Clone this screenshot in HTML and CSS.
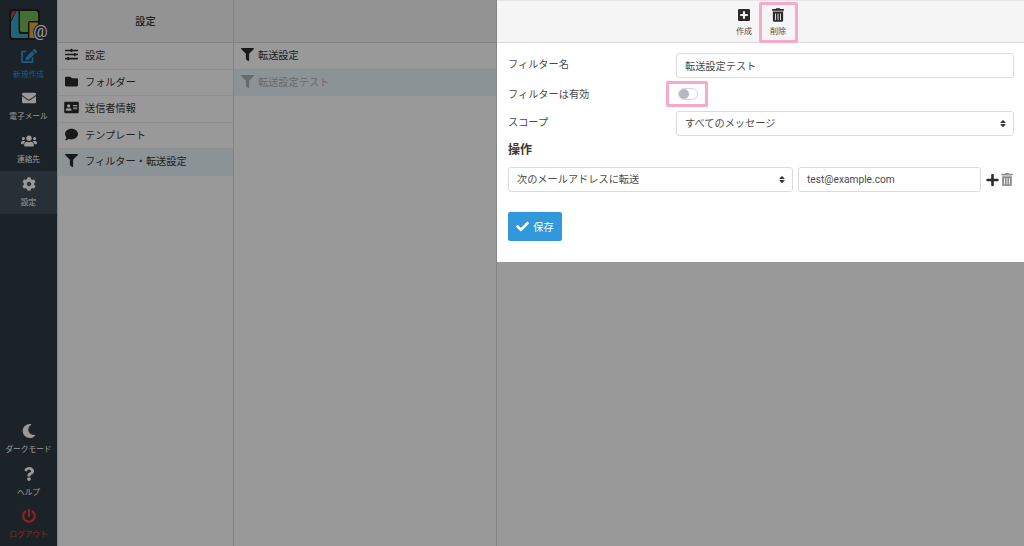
FILE: index.html
```html
<!DOCTYPE html>
<html lang="ja">
<head>
<meta charset="utf-8">
<title>設定</title>
<link rel="stylesheet" href="styles.css">
</head>
<body>
<svg class="sprite" xmlns="http://www.w3.org/2000/svg">
<symbol id="i-edit" viewBox="0 0 576 512"><path d="M402.6 83.2l90.2 90.2c3.8 3.8 3.8 10 0 13.8L274.4 405.6l-92.8 10.3c-12.4 1.4-22.9-9.1-21.5-21.5l10.3-92.8L388.8 83.2c3.8-3.8 10-3.8 13.8 0zm162-22.9l-48.8-48.8c-15.2-15.2-39.9-15.2-55.2 0l-35.4 35.4c-3.8 3.8-3.8 10 0 13.8l90.2 90.2c3.8 3.8 10 3.8 13.8 0l35.4-35.4c15.2-15.3 15.2-40 0-55.2zM384 346.2V448H64V128h73.1c3.2 0 6.2-1.3 8.5-3.5l40-40c7.6-7.6 2.2-20.5-8.5-20.5H48C21.5 64 0 85.5 0 112v352c0 26.5 21.5 48 48 48h352c26.5 0 48-21.5 48-48V306.2c0-10.7-12.9-16-20.5-8.5l-40 40c-2.2 2.3-3.5 5.3-3.5 8.5z"/></symbol>
<symbol id="i-envelope" viewBox="0 0 512 512"><path d="M502.3 190.8c3.9-3.1 9.7-.2 9.7 4.7V400c0 26.5-21.5 48-48 48H48c-26.5 0-48-21.5-48-48V195.6c0-5 5.7-7.8 9.7-4.7 22.4 17.4 52.1 39.5 154.1 113.6 21.1 15.4 56.7 47.8 92.2 47.6 35.7.3 72-32.8 92.3-47.6 102-74.1 131.6-96.3 154-113.7zM256 320c23.2.4 56.6-29.2 73.4-41.4 132.7-96.3 142.8-104.7 173.4-128.7 5.8-4.5 9.2-11.5 9.2-18.9v-19c0-26.5-21.5-48-48-48H48C21.5 64 0 85.5 0 112v19c0 7.4 3.4 14.3 9.2 18.9 30.6 23.9 40.7 32.4 173.4 128.7 16.8 12.2 50.2 41.8 73.4 41.4z"/></symbol>
<symbol id="i-users" viewBox="0 0 640 512"><path d="M96 224c35.3 0 64-28.7 64-64s-28.7-64-64-64-64 28.7-64 64 28.7 64 64 64zm448 0c35.3 0 64-28.7 64-64s-28.7-64-64-64-64 28.7-64 64 28.7 64 64 64zm32 32h-64c-17.6 0-33.5 7.1-45.1 18.6 40.3 22.1 68.9 62 75.1 109.4h66c17.7 0 32-14.3 32-32v-32c0-35.3-28.7-64-64-64zm-256 0c61.9 0 112-50.1 112-112S381.9 32 320 32 208 82.1 208 144s50.1 112 112 112zm76.8 32h-8.3c-20.8 10-43.9 16-68.5 16s-47.6-6-68.5-16h-8.3C179.6 288 128 339.6 128 403.2V432c0 26.5 21.5 48 48 48h288c26.5 0 48-21.5 48-48v-28.8c0-63.6-51.6-115.2-115.2-115.2zm-223.7-13.4C161.5 263.1 145.6 256 128 256H64c-35.3 0-64 28.7-64 64v32c0 17.7 14.3 32 32 32h65.9c6.3-47.4 34.9-87.3 75.2-109.4z"/></symbol>
<symbol id="i-cog" viewBox="0 0 512 512"><path d="M487.4 315.7l-42.6-24.6c4.3-23.2 4.3-47 0-70.2l42.6-24.6c4.9-2.8 7.1-8.6 5.5-14-11.1-35.6-30-67.8-54.7-94.6-3.8-4.1-10-5.1-14.8-2.3L380.8 110c-17.9-15.4-38.5-27.3-60.8-35.1V25.8c0-5.6-3.9-10.5-9.4-11.7-36.7-8.2-74.3-7.8-109.2 0-5.5 1.2-9.4 6.1-9.4 11.7V75c-22.2 7.9-42.8 19.8-60.8 35.1L88.7 85.5c-4.9-2.8-11-1.9-14.8 2.3-24.7 26.7-43.6 58.9-54.7 94.6-1.7 5.4.6 11.2 5.5 14L67.3 221c-4.3 23.2-4.3 47 0 70.2l-42.6 24.6c-4.9 2.8-7.1 8.6-5.5 14 11.1 35.6 30 67.8 54.7 94.6 3.8 4.1 10 5.1 14.8 2.3l42.6-24.6c17.9 15.4 38.5 27.3 60.8 35.1v49.2c0 5.6 3.9 10.5 9.4 11.7 36.7 8.2 74.3 7.8 109.2 0 5.5-1.2 9.4-6.1 9.4-11.7v-49.2c22.2-7.9 42.8-19.8 60.8-35.1l42.6 24.6c4.9 2.8 11 1.9 14.8-2.3 24.7-26.7 43.6-58.9 54.7-94.6 1.5-5.5-.7-11.3-5.6-14.1zM256 336c-44.1 0-80-35.9-80-80s35.9-80 80-80 80 35.9 80 80-35.9 80-80 80z"/></symbol>
<symbol id="i-moon" viewBox="0 0 512 512"><path d="M283.211 512c78.962 0 151.079-35.925 198.857-94.792 7.068-8.708-.639-21.43-11.562-19.35-124.203 23.654-238.262-71.576-238.262-196.954 0-72.222 38.662-138.635 101.498-174.394 9.686-5.512 7.25-20.197-3.756-22.23A258.156 258.156 0 0 0 283.211 0c-141.309 0-256 114.511-256 256 0 141.309 114.511 256 256 256z"/></symbol>
<symbol id="i-question" viewBox="0 0 384 512"><path d="M202.021 0C122.202 0 70.503 32.703 29.914 91.026c-7.363 10.58-5.093 25.086 5.178 32.874l43.138 32.709c10.373 7.865 25.132 6.026 33.253-4.148 25.049-31.381 43.63-49.449 82.757-49.449 30.764 0 68.816 19.799 68.816 49.631 0 22.552-18.617 34.134-48.993 51.164-35.423 19.86-82.299 44.576-82.299 106.405V320c0 13.255 10.745 24 24 24h72.471c13.255 0 24-10.745 24-24v-5.773c0-42.86 125.268-44.645 125.268-160.627C377.504 66.256 286.902 0 202.021 0zM192 373.459c-38.196 0-69.271 31.075-69.271 69.271 0 38.195 31.075 69.27 69.271 69.27s69.271-31.075 69.271-69.271-31.075-69.27-69.271-69.27z"/></symbol>
<symbol id="i-power" viewBox="0 0 512 512"><path d="M400 54.1c63 45 104 118.6 104 201.9 0 136.8-110.8 247.7-247.5 248C120 504.3 8.2 393 8 256.4 7.9 173.1 48.9 99.3 111.8 54.2c11.7-8.3 28-4.8 35 7.7L162.6 90c5.9 10.5 3.1 23.8-6.6 31-41.5 30.8-68 79.6-68 134.9-.1 92.3 74.5 168.1 168 168.1 91.6 0 168.6-74.2 168-169.1-.3-51.8-24.7-101.8-68.1-134-9.7-7.2-12.4-20.5-6.5-30.9l15.8-28.1c7-12.4 23.2-16.1 34.8-7.8zM296 264V24c0-13.3-10.7-24-24-24h-32c-13.3 0-24 10.7-24 24v240c0 13.3 10.7 24 24 24h32c13.3 0 24-10.7 24-24z"/></symbol>
<symbol id="i-sliders" viewBox="0 0 512 512"><path d="M496 384H160v-16c0-8.8-7.2-16-16-16h-32c-8.8 0-16 7.2-16 16v16H16c-8.8 0-16 7.2-16 16v32c0 8.8 7.2 16 16 16h80v16c0 8.8 7.2 16 16 16h32c8.8 0 16-7.2 16-16v-16h336c8.8 0 16-7.2 16-16v-32c0-8.8-7.2-16-16-16zm0-160h-80v-16c0-8.8-7.2-16-16-16h-32c-8.8 0-16 7.2-16 16v16H16c-8.8 0-16 7.2-16 16v32c0 8.8 7.2 16 16 16h336v16c0 8.8 7.2 16 16 16h32c8.8 0 16-7.2 16-16v-16h80c8.8 0 16-7.2 16-16v-32c0-8.8-7.2-16-16-16zm0-160H288V48c0-8.8-7.2-16-16-16h-32c-8.8 0-16 7.2-16 16v16H16C7.2 64 0 71.2 0 80v32c0 8.8 7.2 16 16 16h208v16c0 8.8 7.2 16 16 16h32c8.8 0 16-7.2 16-16v-16h208c8.8 0 16-7.2 16-16V80c0-8.8-7.2-16-16-16z"/></symbol>
<symbol id="i-folder" viewBox="0 0 512 512"><path d="M464 128H272l-64-64H48C21.49 64 0 85.49 0 112v288c0 26.51 21.49 48 48 48h416c26.51 0 48-21.49 48-48V176c0-26.51-21.49-48-48-48z"/></symbol>
<symbol id="i-card" viewBox="0 0 576 512"><path d="M528 32H48C21.5 32 0 53.5 0 80v352c0 26.5 21.5 48 48 48h480c26.5 0 48-21.5 48-48V80c0-26.5-21.5-48-48-48zm-352 96c35.3 0 64 28.7 64 64s-28.7 64-64 64-64-28.7-64-64 28.7-64 64-64zm112 236.8c0 10.6-10 19.2-22.4 19.2H86.4C74 384 64 375.4 64 364.8v-19.2c0-31.8 30.1-57.6 67.2-57.6h5c12.3 5.1 25.7 8 39.8 8s27.6-2.9 39.8-8h5c37.1 0 67.2 25.8 67.2 57.6v19.2zM512 312c0 4.4-3.6 8-8 8H360c-4.4 0-8-3.6-8-8v-16c0-4.4 3.6-8 8-8h144c4.4 0 8 3.6 8 8v16zm0-64c0 4.4-3.6 8-8 8H360c-4.4 0-8-3.6-8-8v-16c0-4.4 3.6-8 8-8h144c4.4 0 8 3.6 8 8v16zm0-64c0 4.4-3.6 8-8 8H360c-4.4 0-8-3.6-8-8v-16c0-4.4 3.6-8 8-8h144c4.4 0 8 3.6 8 8v16z"/></symbol>
<symbol id="i-comment" viewBox="0 0 512 512"><path d="M256 32C114.6 32 0 125.1 0 240c0 49.6 21.4 95 57 130.7C44.5 421.1 2.7 466 2.2 466.5c-2.2 2.3-2.8 5.7-1.5 8.7S4.8 480 8 480c66.3 0 116-31.8 140.6-51.4 32.7 12.3 69 19.4 107.4 19.4 141.4 0 256-93.1 256-208S397.4 32 256 32z"/></symbol>
<symbol id="i-filter" viewBox="0 0 512 512"><path d="M487.976 0H24.028C2.71 0-8.047 25.866 7.058 40.971L192 225.941V432c0 7.831 3.821 15.17 10.237 19.662l80 55.98C298.02 518.69 320 507.493 320 487.98V225.941l184.947-184.97C520.021 25.896 509.338 0 487.976 0z"/></symbol>
<symbol id="i-plus-square" viewBox="0 0 448 512"><path d="M400 32H48C21.5 32 0 53.5 0 80v352c0 26.5 21.5 48 48 48h352c26.5 0 48-21.5 48-48V80c0-26.5-21.5-48-48-48zm-32 252c0 6.6-5.4 12-12 12h-92v92c0 6.6-5.4 12-12 12h-56c-6.6 0-12-5.4-12-12v-92H92c-6.6 0-12-5.4-12-12v-56c0-6.6 5.4-12 12-12h92v-92c0-6.6 5.4-12 12-12h56c6.6 0 12 5.4 12 12v92h92c6.6 0 12 5.4 12 12v56z"/></symbol>
<symbol id="i-trash" viewBox="0 0 448 512"><path d="M32 464a48 48 0 0 0 48 48h288a48 48 0 0 0 48-48V128H32zm272-256a16 16 0 0 1 32 0v224a16 16 0 0 1-32 0zm-96 0a16 16 0 0 1 32 0v224a16 16 0 0 1-32 0zm-96 0a16 16 0 0 1 32 0v224a16 16 0 0 1-32 0zM432 32H312l-9.4-18.7A24 24 0 0 0 281.1 0H166.8a23.72 23.72 0 0 0-21.4 13.3L136 32H16A16 16 0 0 0 0 48v32a16 16 0 0 0 16 16h416a16 16 0 0 0 16-16V48a16 16 0 0 0-16-16z"/></symbol>
<symbol id="i-plus" viewBox="0 0 448 512"><path d="M416 208H272V64c0-17.67-14.33-32-32-32h-32c-17.67 0-32 14.33-32 32v144H32c-17.67 0-32 14.33-32 32v32c0 17.67 14.33 32 32 32h144v144c0 17.67 14.33 32 32 32h32c17.67 0 32-14.33 32-32V304h144c17.67 0 32-14.33 32-32v-32c0-17.67-14.33-32-32-32z"/></symbol>
<symbol id="i-check" viewBox="0 0 512 512"><path d="M173.898 439.404l-166.4-166.4c-9.997-9.997-9.997-26.206 0-36.204l36.203-36.204c9.997-9.998 26.207-9.998 36.204 0L192 312.69 432.095 72.596c9.997-9.997 26.207-9.997 36.204 0l36.203 36.204c9.997 9.997 9.997 26.206 0 36.204l-294.4 294.401c-9.998 9.997-26.207 9.997-36.204-.001z"/></symbol>
<symbol id="i-sort" viewBox="0 0 320 512"><path d="M41 288h238c21.4 0 32.1 25.9 17 41L177 448c-9.4 9.4-24.6 9.4-33.9 0L24 329c-15.1-15.1-4.4-41 17-41zm255-105L177 64c-9.4-9.4-24.6-9.4-33.9 0L24 183c-15.1 15.1-4.4 41 17 41h238c21.4 0 32.1-25.9 17-41z"/></symbol>
</svg>

<div class="app">
  <nav class="sidebar">
    <div class="logo">
      <svg class="logo-mark" viewBox="0 0 31 31">
        <rect x="0" y="0" width="31" height="31" rx="3" fill="#2a1f22"/>
        <path d="M2 6 Q2 2 5 2 H7 L2 11 Z" fill="#d23a4a"/>
        <path d="M7.500 2 H9.500 V22 Q9.500 25 12 25 H19 V29 H4 Q2 29 2 27 V13 Z" fill="#34a9c9"/>
        <path d="M11 2 H26 Q29 2 29 5 V12 H21 Q19 12 19 14 V23 H13 Q11 23 11 21 Z" fill="#75b755"/>
        <path d="M21 13.500 H29 V27 Q29 29 27 29 H20.500 V14 Z" fill="#e0ad3d"/>
      </svg>
      <span class="logo-at">@</span>
    </div>
    <a class="nav-item nav-new"><svg class="nav-icon"><use href="#i-edit"/></svg><span>新規作成</span></a>
    <a class="nav-item"><svg class="nav-icon"><use href="#i-envelope"/></svg><span>電子メール</span></a>
    <a class="nav-item"><svg class="nav-icon"><use href="#i-users"/></svg><span>連絡先</span></a>
    <a class="nav-item nav-active"><svg class="nav-icon"><use href="#i-cog"/></svg><span>設定</span></a>
    <div class="nav-spacer"></div>
    <a class="nav-item"><svg class="nav-icon"><use href="#i-moon"/></svg><span>ダークモード</span></a>
    <a class="nav-item"><svg class="nav-icon"><use href="#i-question"/></svg><span>ヘルプ</span></a>
    <a class="nav-item nav-logout"><svg class="nav-icon"><use href="#i-power"/></svg><span>ログアウト</span></a>
  </nav>

  <section class="col col-settings">
    <header class="col-head">設定</header>
    <a class="row"><svg class="row-icon"><use href="#i-sliders"/></svg>設定</a>
    <a class="row"><svg class="row-icon"><use href="#i-folder"/></svg>フォルダー</a>
    <a class="row"><svg class="row-icon row-icon-wide"><use href="#i-card"/></svg>送信者情報</a>
    <a class="row"><svg class="row-icon"><use href="#i-comment"/></svg>テンプレート</a>
    <a class="row row-selected"><svg class="row-icon"><use href="#i-filter"/></svg>フィルター・転送設定</a>
  </section>

  <section class="col col-filters">
    <header class="col-head"></header>
    <a class="row"><svg class="row-icon"><use href="#i-filter"/></svg>転送設定</a>
    <a class="row row-selected row-muted"><svg class="row-icon"><use href="#i-filter"/></svg>転送設定テスト</a>
  </section>
</div>

<div class="dim"></div>

<aside class="panel">
  <div class="toolbar">
    <button class="tool"><svg class="tool-icon"><use href="#i-plus-square"/></svg><span>作成</span></button>
    <button class="tool mark"><svg class="tool-icon"><use href="#i-trash"/></svg><span>削除</span></button>
  </div>
  <form class="form">
    <div class="field">
      <label>フィルター名</label>
      <input class="control" type="text" value="転送設定テスト">
    </div>
    <div class="field field-toggle">
      <label>フィルターは有効</label>
      <span class="toggle mark"><span class="knob"></span></span>
    </div>
    <div class="field">
      <label>スコープ</label>
      <div class="select"><select class="control"><option>すべてのメッセージ</option></select><svg class="sort"><use href="#i-sort"/></svg></div>
    </div>
    <h3 class="section">操作</h3>
    <div class="action">
      <div class="select select-action"><select class="control"><option>次のメールアドレスに転送</option></select><svg class="sort"><use href="#i-sort"/></svg></div>
      <input class="control action-input" type="text" value="test@example.com">
      <svg class="action-plus"><use href="#i-plus"/></svg>
      <svg class="action-trash"><use href="#i-trash"/></svg>
    </div>
    <button class="save" type="button"><svg class="save-icon"><use href="#i-check"/></svg>保存</button>
  </form>
</aside>
</body>
</html>
```

FILE: styles.css
```css
* { box-sizing: border-box; }
html, body { margin: 0; height: 100%; overflow: hidden; }
body {
  position: relative;
  font-family: Roboto, "Noto Sans CJK JP", sans-serif;
  color: #363636;
  background: #fff;
}
.sprite { display: none; }
.app { display: flex; height: 546px; }

.sidebar {
  width: 57px;
  flex: none;
  display: flex;
  flex-direction: column;
  background: #2d3a44;
}
.logo { position: relative; height: 43px; flex: none; padding: 9px 0 0 9px; }
.logo-mark { display: block; width: 31px; height: 31px; }
.logo-at {
  position: absolute;
  left: 33px;
  top: 24px;
  width: 15px;
  height: 17px;
  border-radius: 50%;
  background: #2d3a44;
  font-size: 16px;
  line-height: 16px;
  text-align: center;
  color: #fff;
}
.nav-item {
  height: 42.67px;
  flex: none;
  display: flex;
  flex-direction: column;
  align-items: center;
  justify-content: center;
  gap: 6px;
  color: #fff;
  font-size: 7.7px;
  line-height: 11px;
  white-space: nowrap;
}
.nav-icon { width: 16px; height: 14px; fill: currentColor; }
.nav-new { color: #3298dc; }
.nav-active { background: #414f5c; }
.nav-logout { color: #ee3b3b; }
.nav-spacer { flex: 1; }

.col { border-right: 1px solid #dbdbdb; flex: none; }
.col-settings { width: 177px; border-left: 1px solid #dbdbdb; }
.col-filters { width: 263px; }
.col-head {
  height: 43px;
  padding-bottom: 1px;
  background: #f5f5f5;
  border-bottom: 1px solid #dbdbdb;
  display: flex;
  align-items: center;
  justify-content: center;
  font-size: 10.2px;
  font-weight: 500;
}
.row {
  height: 26.5px;
  display: flex;
  align-items: center;
  gap: 7px;
  padding: 0 0 2px 7px;
  border-bottom: 1px solid #ededed;
  font-size: 10.2px;
  white-space: nowrap;
}
.col-filters .row { gap: 4px; }
.row-icon { width: 13px; height: 13px; fill: #2b2b2b; flex: none; }
.row-icon-wide { width: 15px; margin: 0 -1px; }
.row-selected { background: #eaf5fa; border-bottom-color: #eaf5fa; }
.row-muted { color: #aeb2b5; }
.row-muted .row-icon { fill: #aeb2b5; }

.dim { position: absolute; inset: 0; background: rgba(0, 0, 0, 0.4); }

.panel {
  position: absolute;
  left: 497px;
  top: 0;
  width: 527px;
  height: 262px;
  background: #fff;
  border-top: 1px solid #e6e6e6;
  color: #4a4a4a;
}
.toolbar {
  height: 42px;
  background: #f5f5f5;
  border-bottom: 1px solid #dbdbdb;
  display: flex;
  justify-content: center;
  padding-left: 1px;
}
.tool {
  width: 34px;
  border: 0;
  padding: 7px 0 0;
  background: none;
  font: inherit;
  font-size: 8px;
  line-height: 11px;
  color: #4a4a4a;
  display: flex;
  flex-direction: column;
  align-items: center;
  gap: 4px;
}
.tool-icon { width: 12px; height: 14px; fill: #2b2b2b; }

.form { padding: 10px 10px 0 11px; }
.field {
  display: grid;
  grid-template-columns: 168px 338px;
  align-items: center;
  margin-bottom: 8px;
}
.field label { font-size: 10.2px; line-height: 16px; position: relative; top: -1px; }
.field-toggle { height: 14px; margin-bottom: 11px; }
.field-toggle label { top: 1px; }
.control {
  display: block;
  width: 100%;
  height: 25px;
  border: 1px solid #dbdbdb;
  border-radius: 3px;
  background: #fff;
  padding: 0 8px;
  font: inherit;
  font-size: 10.2px;
  color: #4a4a4a;
  appearance: none;
  outline: none;
}
.select { position: relative; }
.sort {
  position: absolute;
  right: 8px;
  top: 8px;
  width: 6px;
  height: 9px;
  fill: #363636;
}
.toggle {
  position: relative;
  display: block;
  margin-left: 2px;
  width: 20px;
  height: 12px;
  border: 1px solid #d6d6d6;
  border-radius: 6px;
  background: #fff;
}
.knob {
  position: absolute;
  left: 0;
  top: 0;
  width: 10px;
  height: 10px;
  border-radius: 50%;
  background: #b5b9bd;
}
.mark { position: relative; }
.mark::after {
  content: "";
  position: absolute;
  border: 3px solid #f9a8c9;
  border-radius: 2px;
  pointer-events: none;
}
.tool.mark::after { left: -2px; right: -3px; top: 1px; bottom: -1px; }
.toggle.mark::after { left: -13px; right: -11px; top: -8px; bottom: -8px; }

.section {
  margin: -1px 0 9px;
  font-size: 12px;
  line-height: 15px;
  font-weight: 700;
  color: #363636;
}
.action { display: flex; align-items: center; }
.select-action { width: 285px; flex: none; }
.action-input { width: 183px; flex: none; margin-left: 5px; }
.action-plus { width: 13px; height: 14px; fill: #2b2b2b; margin-left: 5px; flex: none; }
.action-trash { width: 12px; height: 13px; fill: #8f8f8f; margin-left: 2px; flex: none; }
.save {
  margin-top: 20px;
  width: 54px;
  height: 29px;
  border: 0;
  border-radius: 2px;
  background: #3298dc;
  color: #fff;
  font: inherit;
  font-size: 10.2px;
  display: flex;
  align-items: center;
  justify-content: center;
  gap: 4px;
  padding: 0;
}
.save-icon { width: 13px; height: 13px; fill: #fff; }
```
